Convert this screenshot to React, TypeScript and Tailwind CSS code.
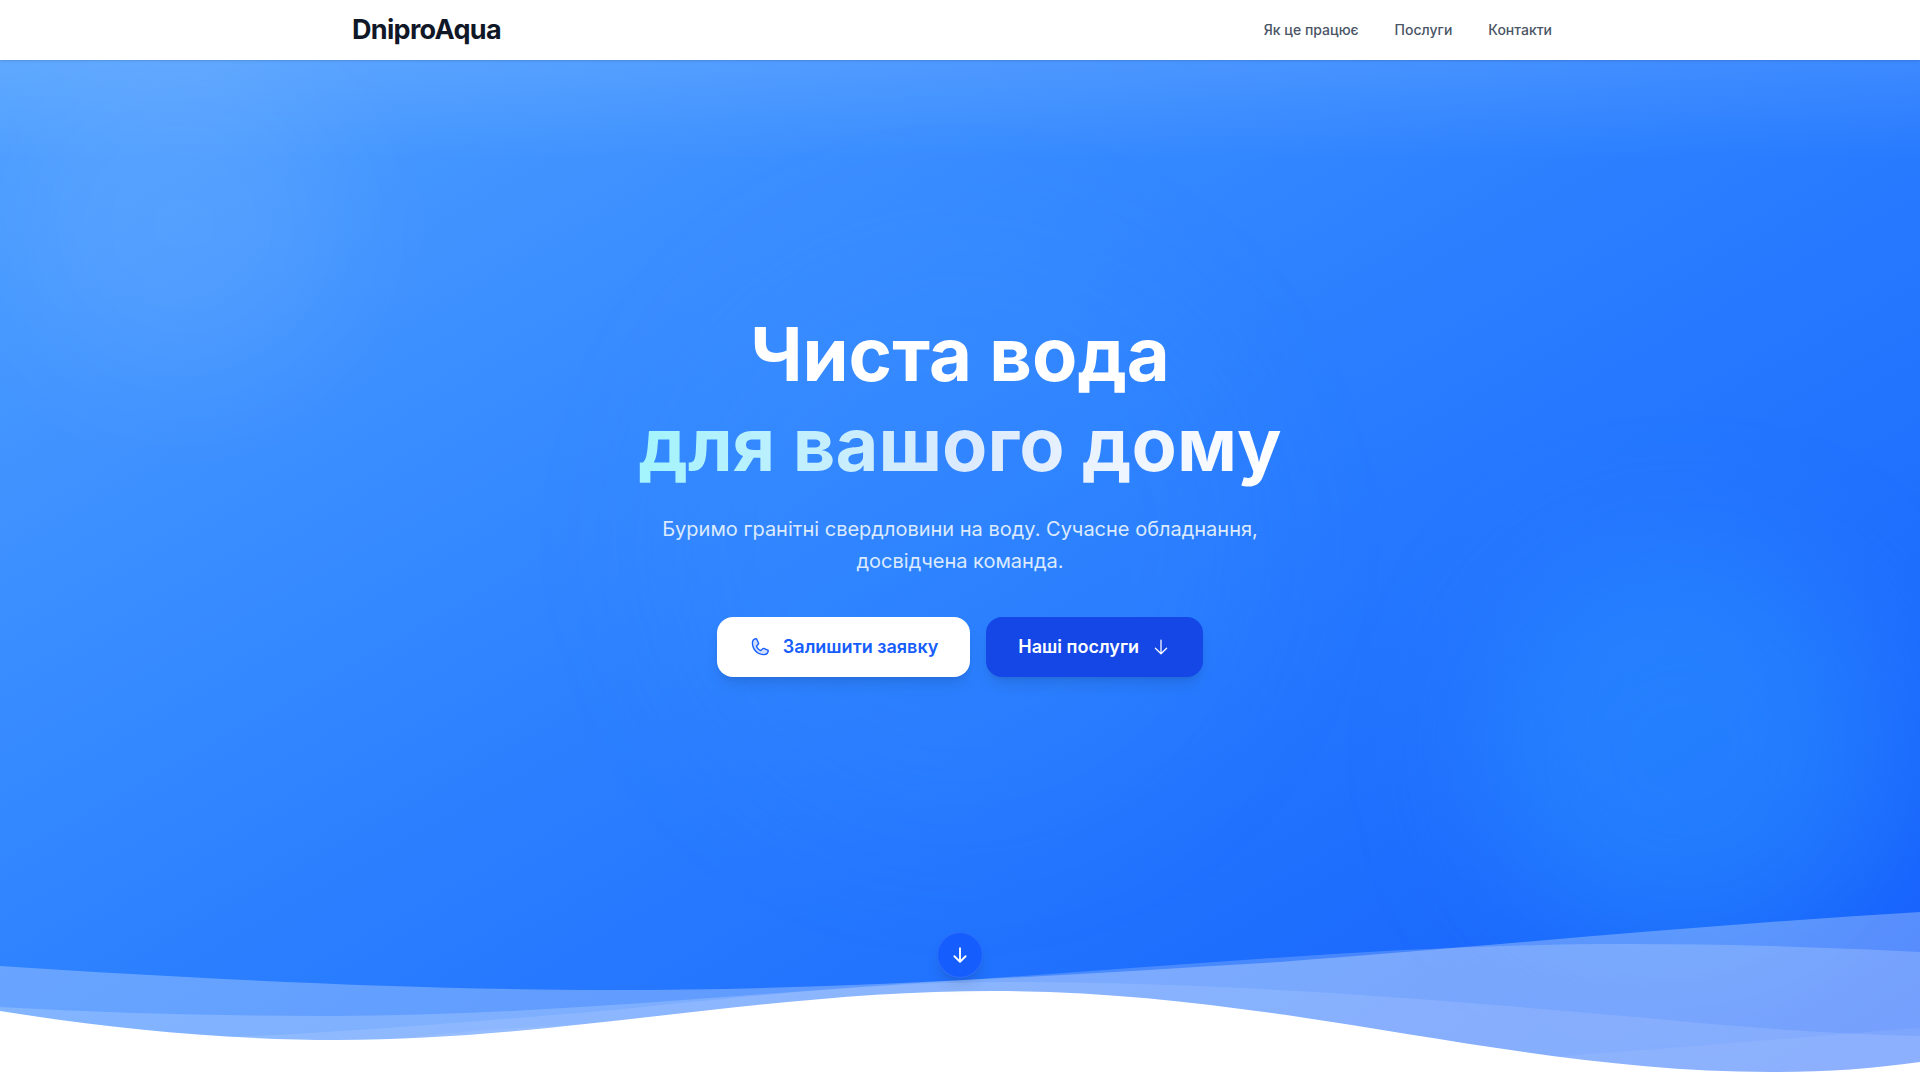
import { PiArrowDown, PiArrowDownBold, PiPhoneDuotone } from 'react-icons/pi'

const links = [
  { label: 'Як це працює', href: '#how' },
  { label: 'Послуги', href: '#services' },
  { label: 'Контакти', href: '#contacts' },
]

function Header() {
  return (
    <header className="relative z-10 bg-white shadow-sm">
      <div className="mx-auto flex h-[60px] max-w-[1200px] items-center justify-between">
        <a href="#top" className="-ml-2 text-[27px] font-bold tracking-tight text-gray-900">
          DniproAqua
        </a>
        <nav className="flex items-center gap-9 pr-2">
          {links.map((l) => (
            <a key={l.href} href={l.href} className="text-sm font-medium text-gray-600">
              {l.label}
            </a>
          ))}
        </nav>
      </div>
    </header>
  )
}

function Waves() {
  return (
    <svg
      className="absolute inset-x-0 bottom-0 h-[180px] w-full"
      viewBox="0 900 1920 180"
      preserveAspectRatio="none"
      fill="white"
      aria-hidden="true"
    >
      <path
        opacity=".28"
        d="M0 966C200 979 420 990 612 990C840 990 1060 975 1280 962C1480 947 1700 925 1920 912V1080H0Z"
      />
      <path
        opacity=".19"
        d="M0 1007C110 1013 220 1016 330 1016C540 1016 760 992 979 979C1200 964 1410 944 1627 944C1725 944 1820 947 1920 952V1080H0Z"
      />
      <path
        opacity=".11"
        d="M0 1040C80 1040 170 1040 253 1036C380 1030 500 1019 580 1013C700 1002 860 982 1000 982C1240 982 1440 1000 1647 1018C1740 1027 1830 1034 1920 1036V1080H0Z"
      />
      <path
        opacity=".07"
        d="M0 1052C200 1052 340 1046 440 1034C500 1028 550 1026 600 1023C760 1014 860 1005 995 1005C1200 1005 1360 1068 1566 1056C1690 1047 1800 1037 1920 1028V1080H0Z"
      />
      <path d="M0 1011C100 1027 220 1040 338 1040C560 1040 760 991 995 991C1280 991 1510 1072 1770 1072C1825 1072 1870 1069 1920 1062V1080H0Z" />
    </svg>
  )
}

export default function App() {
  return (
    <div id="top" className="flex min-h-screen flex-col bg-white font-['Inter',sans-serif]">
      <Header />
      <main className="relative -mt-[60px] flex flex-1 flex-col items-center justify-center overflow-hidden bg-linear-to-br from-[#51a2ff] via-[#2b7fff] to-[#155dfc] pt-[60px]">
        <div className="absolute inset-x-0 top-0 h-40 bg-linear-to-b from-white/15 to-transparent" />
        <div className="absolute left-6 top-16 size-[320px] rounded-full bg-white/8 blur-3xl" />
        <div className="absolute right-9 bottom-[130px] size-[400px] rounded-full bg-[#32a0ff]/35 blur-3xl" />
        <div className="absolute left-1/2 top-1/2 size-[600px] -translate-x-1/2 -translate-y-1/2 rounded-full bg-[#51a2ff]/10 blur-3xl" />
        <Waves />
        <section className="relative flex flex-col items-center pb-[154px] text-center">
          <h1 className="text-[74px] leading-[90px] font-bold text-white">
            <span className="block">Чиста вода</span>
            <span className="block bg-linear-to-r from-[#a2f4fd] via-[#dbeafe] to-white bg-clip-text text-transparent">
              для вашого дому
            </span>
          </h1>
          <p className="mt-6 max-w-[672px] text-xl leading-8 text-blue-100">
            Буримо гранітні свердловини на воду. Сучасне обладнання, досвідчена команда.
          </p>
          <div className="mt-10 flex gap-4">
            <a
              href="#contacts"
              className="flex h-[60px] items-center gap-3 rounded-2xl bg-white px-8 text-lg font-semibold text-[#155dfc] shadow-lg"
            >
              <PiPhoneDuotone className="size-[22px]" />
              Залишити заявку
            </a>
            <a
              href="#services"
              className="flex h-[60px] items-center gap-3 rounded-2xl bg-[#1447e6] px-8 text-lg font-semibold text-white shadow-lg"
            >
              Наші послуги
              <PiArrowDown className="size-5" />
            </a>
          </div>
        </section>
        <button
          type="button"
          aria-label="Прокрутити вниз"
          className="absolute bottom-[102px] left-1/2 flex size-[46px] -translate-x-1/2 items-center justify-center rounded-full border border-white/10 bg-[#155dfc] text-white shadow-lg"
        >
          <PiArrowDownBold className="size-5" />
        </button>
      </main>
    </div>
  )
}
